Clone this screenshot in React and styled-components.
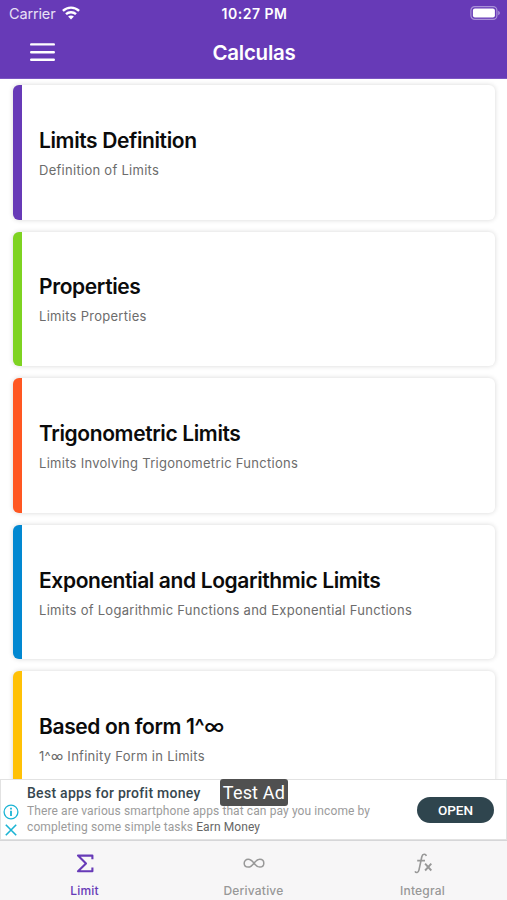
import React, {useState} from 'react'
import styled, {createGlobalStyle} from 'styled-components'

const GlobalStyle = createGlobalStyle`
    * {
        box-sizing: border-box;
    }
    body {
        margin: 0;
        background: #fff;
        font-family: Inter, 'Liberation Sans', sans-serif;
    }
`;

const Screen = styled.div`
    display: flex;
    flex-direction: column;
    width: 507px;
    height: 900px;
    overflow: hidden;
`;

const Header = styled.header`
    flex: none;
    height: 79px;
    background: #673ab7;
    border-bottom: 1px solid #7c56c2;
    color: #fff;
`;

const StatusBar = styled.div`
    display: grid;
    grid-template-columns: 1fr auto 1fr;
    align-items: center;
    height: 26px;
    padding: 0 7px 0 9px;
`;

const Carrier = styled.div`
    display: flex;
    align-items: center;
    gap: 7px;
    padding-top: 1px;
    font-size: 14.5px;
    letter-spacing: -0.15px;
    color: #e8e0f5;

    svg {
        margin-top: -1px;
    }
`;

const Clock = styled.div`
    padding-top: 1px;
    font-size: 14px;
    font-weight: 600;
    letter-spacing: 0.5px;
`;

const Battery = styled.svg`
    justify-self: end;
`;

const NavBar = styled.div`
    display: grid;
    grid-template-columns: 1fr auto 1fr;
    align-items: center;
    height: 52px;
    padding: 0 30px;
`;

const MenuButton = styled.button`
    display: flex;
    justify-self: start;
    padding: 0;
    border: 0;
    background: none;
    color: #fff;
`;

const PageTitle = styled.h1`
    margin: 0;
    padding: 1px 0 0 1px;
    font-size: 20.5px;
    line-height: 26px;
    font-weight: 600;
    letter-spacing: -0.25px;
`;

const List = styled.main`
    flex: 1;
    min-height: 0;
    display: flex;
    flex-direction: column;
    gap: 12.1px;
    padding: 6px 12px 0 13px;
    overflow: hidden;
`;

const Card = styled.section`
    flex: none;
    display: flex;
    flex-direction: column;
    justify-content: center;
    height: 134.5px;
    padding: 1px 0 0 17px;
    border-left: 9px solid ${props => props.$color};
    border-radius: 6px;
    background: #fff;
    box-shadow: 0 0 5px rgba(0, 0, 0, 0.16);
`;

const CardTitle = styled.h2`
    margin: 0;
    padding-top: 1px;
    font-size: 21px;
    line-height: 26px;
    font-weight: 600;
    letter-spacing: -0.38px;
    color: #0b0b0b;
    white-space: nowrap;

    span {
        font-weight: 500;
    }
`;

const CardText = styled.p`
    margin: 7px 0 0;
    font-size: 13px;
    line-height: 18px;
    letter-spacing: 0.28px;
    color: #6c6c6c;
    white-space: nowrap;
`;

const Banner = styled.aside`
    position: relative;
    flex: none;
    display: flex;
    align-items: center;
    height: 61px;
    padding: 0 12px 0 2px;
    border: 1px solid #e2e2e2;
    background: #fff;
    font-family: Roboto, 'Liberation Sans', sans-serif;
`;

const AdMarks = styled.div`
    display: flex;
    flex-direction: column;
    align-items: center;
    align-self: flex-end;
    gap: 4px;
    width: 16px;
    margin-bottom: 3px;
`;

const AdCopy = styled.div`
    flex: 1;
    padding-left: 8px;
    white-space: nowrap;
`;

const AdTitle = styled.div`
    margin-top: -1px;
    font-size: 14px;
    line-height: 19px;
    font-weight: 500;
    letter-spacing: 0.28px;
    color: #37474f;
`;

const AdLine = styled.div`
    font-size: 12px;
    line-height: 16px;
    letter-spacing: 0.1px;
    color: #9b9b9b;

    span {
        color: #666;
    }
`;

const OpenButton = styled.button`
    width: 77px;
    height: 26px;
    padding: 0;
    border: 0;
    border-radius: 13px;
    background: #2f454e;
    color: #fff;
    font-family: inherit;
    font-size: 13.5px;
    font-weight: 500;
`;

const TestBadge = styled.div`
    position: absolute;
    top: -1px;
    left: 219px;
    width: 68px;
    height: 27px;
    border-radius: 3px;
    background: #505050;
    color: #fff;
    font-size: 18px;
    line-height: 27px;
    letter-spacing: 0.2px;
    text-align: center;
`;

const TabBar = styled.nav`
    flex: none;
    display: grid;
    grid-template-columns: repeat(3, 1fr);
    height: 60px;
    border-top: 1px solid #d6d6d8;
    background: #f7f6f7;
`;

const Tab = styled.button`
    display: flex;
    flex-direction: column;
    align-items: center;
    gap: 7px;
    padding: 11px 0 0;
    border: 0;
    background: none;
    color: ${props => props.$active ? '#673ab7' : '#989898'};
    font-family: inherit;
    font-size: 12px;
    line-height: 15px;
    font-weight: 500;
    letter-spacing: 0.2px;
`;

const cards = [
    {title: 'Limits Definition', text: 'Definition of Limits', color: '#673ab7'},
    {title: 'Properties', text: 'Limits Properties', color: '#7ed321'},
    {title: 'Trigonometric Limits', text: 'Limits Involving Trigonometric Functions', color: '#ff5722'},
    {title: 'Exponential and Logarithmic Limits', text: 'Limits of Logarithmic Functions and Exponential Functions', color: '#0288d1'},
    {title: 'Based on form 1^', symbol: '∞', text: '1^∞ Infinity Form in Limits', color: '#ffc107'}
]

const SigmaIcon = () => (
    <svg width='22' height='24' viewBox='0 0 22 24' fill='none' stroke='currentColor' strokeWidth='2.1' strokeLinejoin='round'>
        <path d='M18.4 7.2V3.6H4L12 11.4L4 19.2H18.4V15.6' />
    </svg>
)

const InfinityIcon = () => (
    <svg width='24' height='24' viewBox='0 0 24 24' fill='none' stroke='currentColor' strokeWidth='1.5'>
        <path d='M12 11.2C9.8 8.4 8.2 7.3 6.2 7.3C3.8 7.3 2.2 9 2.2 11.2S3.8 15.1 6.2 15.1C8.2 15.1 9.8 14 12 11.2S15.8 7.3 17.8 7.3C20.2 7.3 21.8 9 21.8 11.2S20.2 15.1 17.8 15.1C15.8 15.1 14.2 14 12 11.2Z' />
    </svg>
)

const FunctionIcon = () => (
    <svg width='24' height='24' viewBox='0 0 24 24' fill='none' stroke='currentColor' strokeWidth='1.6'>
        <path d='M15.3 4C14.8 1.8 11.6 1.4 10.8 4.8L8 17.8C7.3 21 5 21.2 4 19.4M6.2 8.6H14' />
        <path d='M14.1 11.7L20.3 18.5M20.3 11.7L14.1 18.5' strokeWidth='1.9' />
    </svg>
)

const tabs = [
    {name: 'Limit', Icon: SigmaIcon},
    {name: 'Derivative', Icon: InfinityIcon},
    {name: 'Integral', Icon: FunctionIcon}
]

function App() {
    const [active, setActive] = useState('Limit')

    return (
        <Screen>
            <GlobalStyle />
            <Header>
                <StatusBar>
                    <Carrier>
                        Carrier
                        <svg width='18' height='14' viewBox='0 0 18 14' fill='none' stroke='#fff' strokeWidth='2.4'>
                            <path d='M.9 4.9C5.5.5 12.5.5 17.1 4.9M4 8.2C6.8 5.5 11.2 5.5 14 8.2' />
                            <path d='M9 13.4L6.1 10.5C7.7 9 10.3 9 11.9 10.5Z' fill='#fff' stroke='none' />
                        </svg>
                    </Carrier>
                    <Clock>10:27 PM</Clock>
                    <Battery width='30' height='14' viewBox='0 0 30 14'>
                        <rect x='.9' y='.6' width='26' height='12.8' rx='3.8' fill='none' stroke='#a991d8' strokeWidth='1.2' />
                        <rect x='2.9' y='2.5' width='22' height='9' rx='2' fill='#fff' />
                        <path d='M28.2 4.8C30.4 5.8 30.4 8.2 28.2 9.2Z' fill='#a991d8' />
                    </Battery>
                </StatusBar>
                <NavBar>
                    <MenuButton aria-label='Menu'>
                        <svg width='25' height='20' viewBox='0 0 25 20' stroke='currentColor' strokeWidth='2.4' strokeLinecap='round'>
                            <path d='M1.2 2.4H23.8M1.2 10.2H23.8M1.2 17.8H23.8' />
                        </svg>
                    </MenuButton>
                    <PageTitle>Calculas</PageTitle>
                </NavBar>
            </Header>

            <List>
                {cards.map(card => (
                    <Card key={card.title} $color={card.color}>
                        <CardTitle>{card.title}{card.symbol && <span>{card.symbol}</span>}</CardTitle>
                        <CardText>{card.text}</CardText>
                    </Card>
                ))}
            </List>

            <Banner>
                <AdMarks>
                    <svg width='16' height='16' viewBox='0 0 16 16' fill='none' stroke='#1bb4d4'>
                        <circle cx='8' cy='8' r='6.9' strokeWidth='1.3' />
                        <path d='M8 6.8V12M8 3.7V5.4' strokeWidth='1.8' />
                    </svg>
                    <svg width='12' height='12' viewBox='0 0 12 12' stroke='#1bb4d4' strokeWidth='1.6'>
                        <path d='M.8.8L11.2 11.2M11.2.8L.8 11.2' />
                    </svg>
                </AdMarks>
                <AdCopy>
                    <AdTitle>Best apps for profit money</AdTitle>
                    <AdLine>There are various smartphone apps that can pay you income by</AdLine>
                    <AdLine>completing some simple tasks <span>Earn Money</span></AdLine>
                </AdCopy>
                <OpenButton>OPEN</OpenButton>
                <TestBadge>Test Ad</TestBadge>
            </Banner>

            <TabBar>
                {tabs.map(({name, Icon}) => (
                    <Tab key={name} $active={name === active} onClick={() => setActive(name)}>
                        <Icon />
                        {name}
                    </Tab>
                ))}
            </TabBar>
        </Screen>
    )
}

export default App
